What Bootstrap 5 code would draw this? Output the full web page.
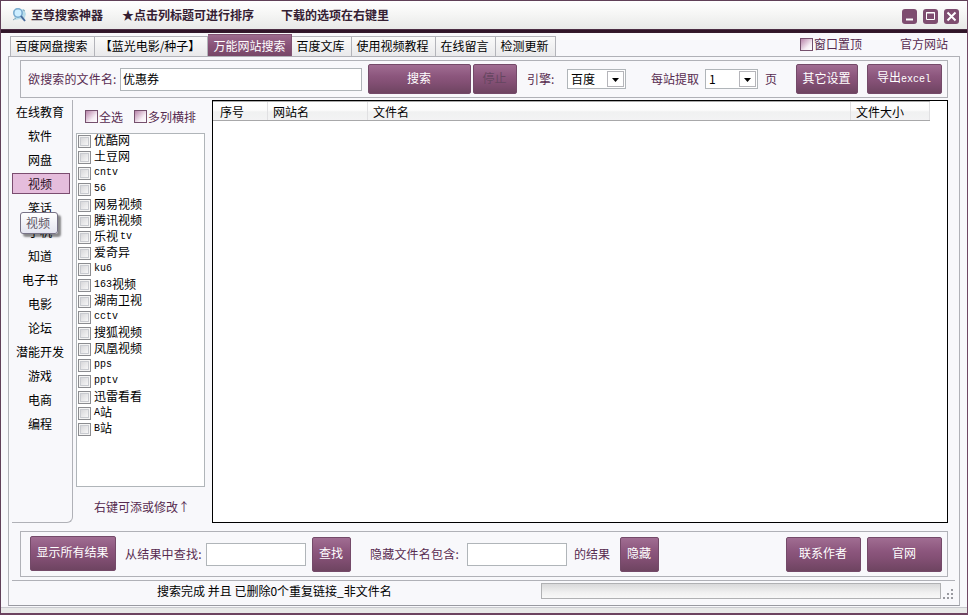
<!DOCTYPE html>
<html lang="zh-CN">
<head>
<meta charset="utf-8">
<title>至尊搜索神器</title>
<link href="https://cdn.jsdelivr.net/npm/bootstrap@5.3.0/dist/css/bootstrap.min.css" rel="stylesheet">
<style>
body{font:12px/16px "Noto Sans CJK SC",sans-serif;color:#000;margin:0;overflow:hidden}
.window{width:968px;height:615px;border:1px solid #604058;border-left-width:1px;border-right-color:#704864;border-bottom:2px solid #6d4360;background:#f8f8fb}
.titlebar{height:28px;padding:0 8px 0 11px;background:linear-gradient(#fff,#f6f6f5 45%,#e8e9e8);font-weight:700;color:#352033}
.titlerule{height:4px;background:linear-gradient(#5a3b52,#2d1226 40%,#351b2e)}
.t2{margin-left:19px}.t3{margin-left:27px}
.winbtn{width:15px;height:15px;margin-left:6px;display:block;position:relative;top:1px}
.tabline{height:23px;padding:0 11px 0 9px}
.tab{height:20px;border:1px solid #b3b4ba;border-bottom:0;border-left-width:0;background:linear-gradient(#fafafa,#e9e9eb);line-height:17px;text-align:center;white-space:nowrap;padding-right:2px}
.tab:first-child{border-left-width:1px}
.tab.on{height:22px;background:linear-gradient(#9c6b8e,#885278 50%,#774767);border-color:#805273;color:#fff;line-height:21px;padding-right:0}
.sheet{margin:0 7px 0 7px;height:550px;border:1px solid #b0b1b7;border-bottom-color:#999aa1;width:952px}
.tint{color:#572b50}
.panelbox{border:1px solid #b0b1b7;margin-left:11px;width:928px}
.toolbar{height:38px;margin-top:3px}
.inp{background:#fff;border:1px solid #b0b5b9;border-radius:0;padding:0 3px 2px 2px;height:23px;font-size:12px;line-height:18px;color:#000;box-shadow:none}
.pbtn{background:linear-gradient(#a06d92,#8c567d 40%,#845075 60%,#6e4461);border:1px solid #744a69;border-radius:2px;color:#fff;font-size:12px;line-height:16px;height:30px;padding:0 1px 2px 0;white-space:nowrap}
.pbtn:hover{color:#fff}
.pbtn.off{color:#654660}
.tall{height:35px;padding-bottom:3px}
.pick{height:20px;background:#fff;border:1px solid #b0b5b9;padding:1px 1px 1px 3px;line-height:16px}
.arrow{width:17px;height:16px;border:1px solid #b5b5ba;flex:none}
.mono{font-family:"Liberation Mono",monospace;font-size:10px}
.work{height:428px;margin-top:2px}
.side{width:61px;height:423px;margin:0 0 0 3px;border:solid #b0b1b7;border-width:0 1px 1px 0;border-radius:0 0 6px 0}
.cat{height:21px;margin:0 0 3px 0;line-height:20px;border:1px solid transparent;text-align:center;white-space:nowrap;width:58px;padding-right:2px}
.cat.on{background:#e5bddc;border-color:#7b4d70;color:#28101f}
.cat:first-child{margin-top:1px}
.hint{left:8px;top:112px;width:38px;height:22px;border:1px solid #777286;border-radius:3px;background:linear-gradient(#fff,#e4e5f0);box-shadow:3px 3px 2px rgba(0,0,0,.45);color:#5c5664;line-height:19px;text-align:center;z-index:2;padding-right:2px}
.mid{width:129px;margin-left:3px}
.tick{width:13px;height:13px;border:1px solid #75506d;background:linear-gradient(135deg,#b783a9,#f6edf4 65%,#fff);flex:none}
.sites{height:354px;border:1px solid #b0b5b9;background:#fff;padding:0 1px}
.site{height:16px}
.site i{width:13px;height:13px;border:1px solid #8b8c90;background:linear-gradient(135deg,#cfcfd2,#fff);box-shadow:inset 0 0 0 1px #f4f4f4,inset 0 0 0 2px #c9cbd0;flex:none;margin:1px 3px 0 0}
.site span{line-height:12px;white-space:nowrap}
.site .mono{line-height:14px}
.grid{width:736px;height:423px;border:1px solid #000;background:#fff;margin-left:7px}
.ghead{width:717px;height:20px;background:linear-gradient(#fff,#fcfcfc 45%,#f0f1f1 55%,#f3f3f4);border-top:1px solid #aaa;border-bottom:1px solid #a8a8aa;line-height:19px}
.ghead div{border-right:1px solid #e0e0e2;padding-left:5px}
.footbar{height:46px;margin-top:3px}
.status{height:27px;margin:3px 3px 0;border-top:1px solid #b0b1b7;width:943px}
.meter{width:400px;height:16px;border:1px solid #b0b1b3;background:linear-gradient(#d9d9da,#f0f0f0 60%,#f8f8f8);margin:2px 0 0 auto}
.sill{height:6px;background:#e8e9e8;margin-top:1px;border-top:1px solid #c9cacf}
</style>
</head>
<body>
<main class="window">
  <header class="titlebar d-flex align-items-center">
    <svg width="15" height="16" viewBox="0 0 15 16" class="me-1"><path d="M1 4 4 1 7 3 12 2 14 7 12 13 8 12 3 13Z" fill="#b8dce9"/><circle cx="6" cy="6" r="4.2" fill="#cdeeff" stroke="#76a9ce" stroke-width="1.5"/><path d="m9 9 4 5" stroke="#476899" stroke-width="2"/><path d="m1 13 3-2M11 3l2 1" stroke="#83a7b9"/></svg>
    <span>至尊搜索神器</span><span class="t2">★点击列标题可进行排序</span><span class="t3">下载的选项在右键里</span>
    <svg class="winbtn ms-auto" viewBox="0 0 15 15"><rect width="15" height="15" rx="3" fill="#7e4d70"/><path d="M4 10.5h7" stroke="#fff" stroke-width="2"/></svg>
    <svg class="winbtn" viewBox="0 0 15 15"><rect width="15" height="15" rx="3" fill="#7e4d70"/><path d="M3.5 3.5h8v7h-8zM3 4h9" fill="none" stroke="#fff"/></svg>
    <svg class="winbtn" viewBox="0 0 15 15"><rect width="15" height="15" rx="3" fill="#7e4d70"/><path d="m3.5 3.5 8 8m0-8-8 8" stroke="#fff" stroke-width="2"/></svg>
  </header>
  <div class="titlerule"></div>
  <nav class="tabline d-flex align-items-end">
    <div class="d-flex align-items-end">
      <div class="tab" style="width:85px">百度网盘搜索</div><div class="tab" style="width:113px">【蓝光电影/种子】</div><div class="tab on" style="width:84px">万能网站搜索</div><div class="tab" style="width:60px">百度文库</div><div class="tab" style="width:84px">使用视频教程</div><div class="tab" style="width:60px">在线留言</div><div class="tab" style="width:60px">检测更新</div>
    </div>
    <div class="ms-auto d-flex align-items-center tint mb-1 pe-2"><i class="tick"></i><span style="margin:0 38px 0 1px">窗口置顶</span><span class="me-0">官方网站</span></div>
  </nav>
  <section class="sheet">
    <div class="panelbox toolbar d-flex align-items-center tint">
      <span style="width:99px;padding-left:7px;letter-spacing:.15px">欲搜索的文件名:</span>
      <input class="inp" style="width:242px" value="优惠券">
      <button class="btn pbtn" style="width:103px;margin-left:6px">搜索</button>
      <button class="btn pbtn off" style="width:44px;margin-left:2px">停止</button>
      <span style="width:40px;margin-left:10px">引擎:</span>
      <div class="pick d-flex text-black" style="width:59px"><span class="flex-fill">百度</span><svg class="arrow" viewBox="0 0 15 14"><path d="M4 6h7l-3.5 4Z"/></svg></div>
      <span style="width:54px;margin-left:25px">每站提取</span>
      <div class="pick d-flex text-black" style="width:53px"><span class="flex-fill">1</span><svg class="arrow" viewBox="0 0 15 14"><path d="M4 6h7l-3.5 4Z"/></svg></div>
      <span style="width:31px;margin-left:7px">页</span>
      <button class="btn pbtn" style="width:62px">其它设置</button>
      <button class="btn pbtn" style="width:75px;margin-left:9px">导出<span class="mono">excel</span></button>
    </div>
    <div class="work d-flex">
      <aside class="side position-relative">
        <div class="cat">在线教育</div><div class="cat">软件</div><div class="cat">网盘</div><div class="cat on">视频</div><div class="cat">笑话</div><div class="cat">手机</div><div class="cat">知道</div><div class="cat">电子书</div><div class="cat">电影</div><div class="cat">论坛</div><div class="cat">潜能开发</div><div class="cat">游戏</div><div class="cat">电商</div><div class="cat">编程</div>
        <div class="hint position-absolute">视频</div>
      </aside>
      <div class="mid">
        <div class="d-flex align-items-center tint" style="height:33px;padding-left:9px"><i class="tick"></i><span style="margin:0 11px 0 1px">全选</span><i class="tick"></i><span style="margin-left:1px">多列横排</span></div>
        <div class="sites">
          <div class="site d-flex"><i></i><span>优酷网</span></div><div class="site d-flex"><i></i><span>土豆网</span></div><div class="site d-flex"><i></i><span class="mono">cntv</span></div><div class="site d-flex"><i></i><span class="mono">56</span></div><div class="site d-flex"><i></i><span>网易视频</span></div><div class="site d-flex"><i></i><span>腾讯视频</span></div><div class="site d-flex"><i></i><span>乐视</span><span class="mono" style="margin-left:2px">tv</span></div><div class="site d-flex"><i></i><span>爱奇异</span></div><div class="site d-flex"><i></i><span class="mono">ku6</span></div><div class="site d-flex"><i></i><span class="mono">163</span><span>视频</span></div><div class="site d-flex"><i></i><span>湖南卫视</span></div><div class="site d-flex"><i></i><span class="mono">cctv</span></div><div class="site d-flex"><i></i><span>搜狐视频</span></div><div class="site d-flex"><i></i><span>凤凰视频</span></div><div class="site d-flex"><i></i><span class="mono">pps</span></div><div class="site d-flex"><i></i><span class="mono">pptv</span></div><div class="site d-flex"><i></i><span>迅雷看看</span></div><div class="site d-flex"><i></i><span class="mono">A</span><span>站</span></div><div class="site d-flex"><i></i><span class="mono">B</span><span>站</span></div>
        </div>
        <div class="tint" style="padding:12px 0 0 18px">右键可添或修改↑</div>
      </div>
      <div class="grid"><div class="ghead d-flex"><div style="width:55px;padding-left:7px">序号</div><div style="width:100px">网站名</div><div style="width:483px">文件名</div><div style="width:79px">文件大小</div></div></div>
    </div>
    <div class="panelbox footbar d-flex tint align-items-center">
      <button class="btn pbtn tall" style="width:86px;margin:0 9px 2px 9px">显示所有结果</button>
      <span style="width:81px;letter-spacing:.2px">从结果中查找:</span>
      <input class="inp" style="width:100px">
      <button class="btn pbtn tall" style="width:39px;margin-left:6px">查找</button>
      <span style="width:97px;margin-left:19px;letter-spacing:.2px">隐藏文件名包含:</span>
      <input class="inp" style="width:100px">
      <span style="width:46px;margin-left:7px">的结果</span>
      <button class="btn pbtn tall" style="width:39px">隐藏</button>
      <button class="btn pbtn tall ms-auto" style="width:75px">联系作者</button>
      <button class="btn pbtn tall" style="width:75px;margin:0 5px 0 6px">官网</button>
    </div>
    <div class="status d-flex">
      <span style="padding:2px 0 0 145px">搜索完成 并且 已删除0个重复链接_非文件名</span>
      <div class="meter"></div>
      <svg width="14" height="20" viewBox="0 0 14 20"><path d="M10 8h2v2h-2zM10 12h2v2h-2zM6 12h2v2h-2zM10 16h2v2h-2zM6 16h2v2h-2zM2 16h2v2h-2z" fill="#999aa0"/></svg>
    </div>
  </section>
  <div class="sill"></div>
</main>
<script src="https://cdn.jsdelivr.net/npm/bootstrap@5.3.0/dist/js/bootstrap.bundle.min.js"></script>
</body>
</html>
